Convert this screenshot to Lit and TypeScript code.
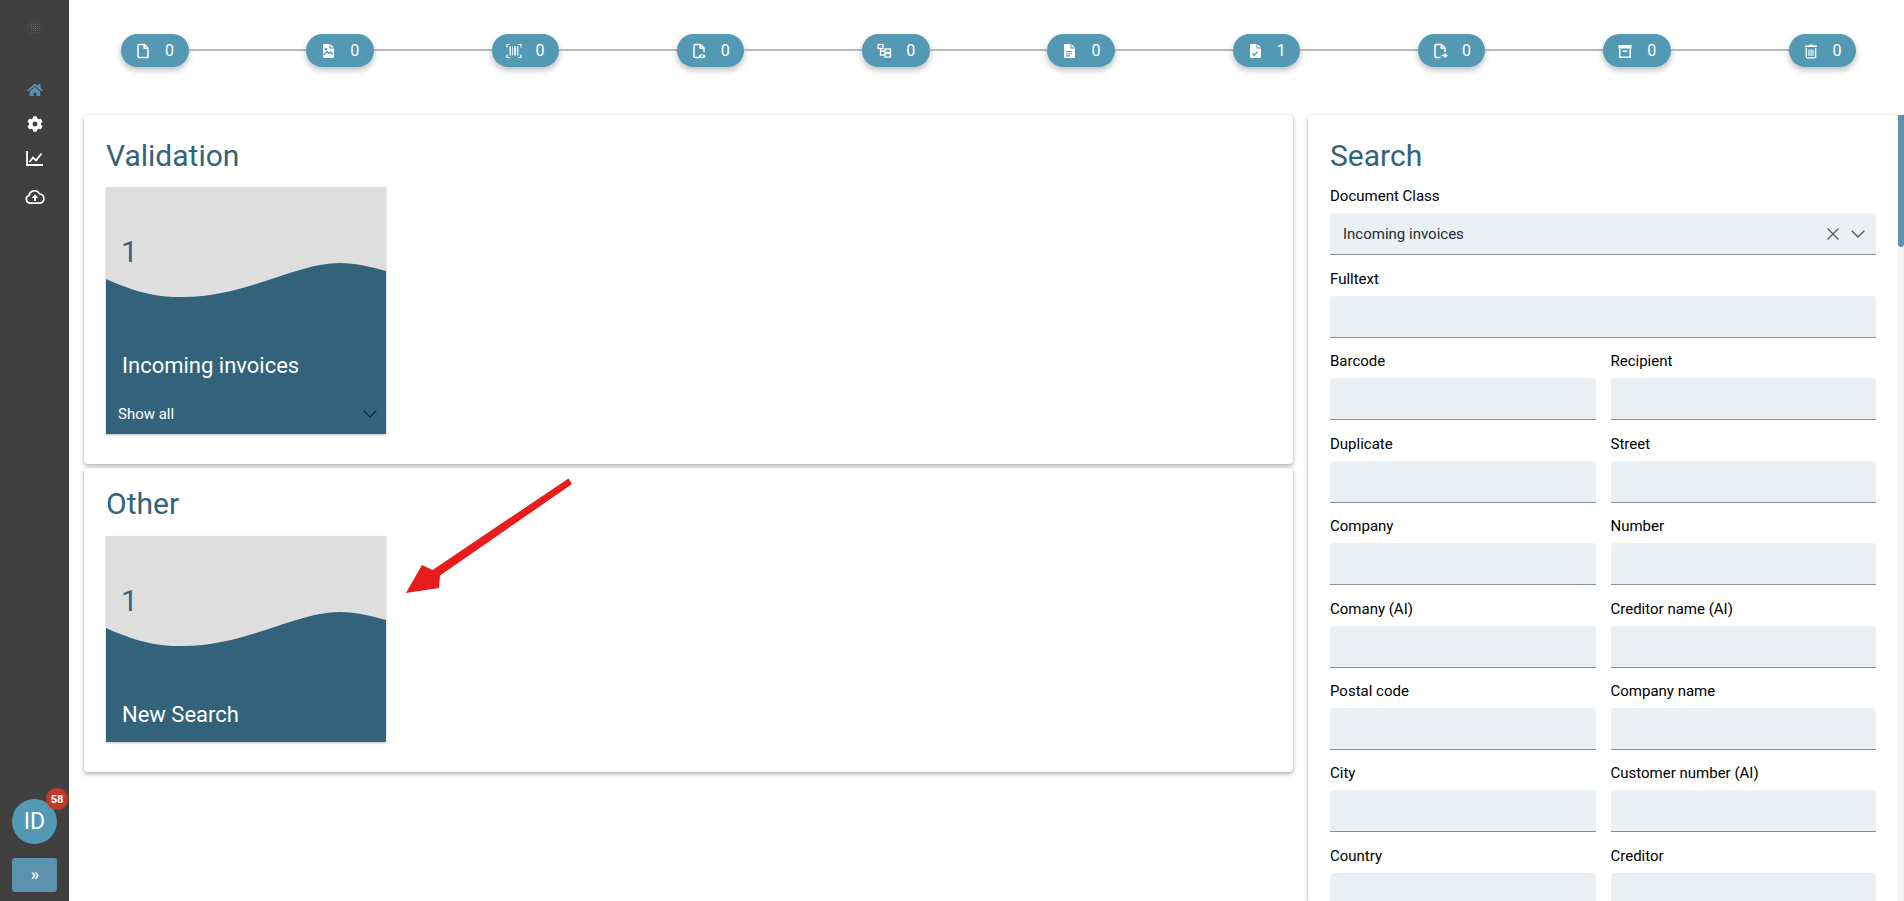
import { LitElement, html, css, svg } from "lit";
import { customElement } from "lit/decorators.js";

const FILE = "M4 1.5h5.5L13 5v9.5H4a1 1 0 0 1-1-1v-11a1 1 0 0 1 1-1z";
const FOLD = "M9.2 1.5V5.3H13";
const SOLID = "M4 1h5.500v4.500H14V14a1 1 0 0 1-1 1H4a1 1 0 0 1-1-1V2a1 1 0 0 1 1-1z M10.500 1 14 4.500h-3.500z";
const stroke = (c: unknown) => svg`<g fill="none" stroke="#fff" stroke-width="1.5" stroke-linejoin="round">${c}</g>`;
const PILL_ICONS: Record<string, unknown> = {
  file: stroke(svg`<path d=${FILE}/><path d=${FOLD}/>`),
  image: svg`<path fill="#fff" d=${SOLID}/><circle cx="6" cy="6" r="1.3" fill="#5499b3"/><path fill="none" stroke="#5499b3" stroke-width="1.4" d="M3.500 12 7 8.500l2 2 1.500-1.500 2.500 2.500"/>`,
  barcode: svg`<g fill="none" stroke="#fff" stroke-width="1.200"><path d="M1 4.500V1.500h3M12 1.500h3v3M15 11.500v3h-3M4 14.500H1v-3"/></g><path fill="#fff" opacity=".85" d="M3.500 3.500h1.500v9H3.500zM6 3.500h1v9H6zM8 3.500h2v9H8zM11 3.500h1.500v9H11z"/>`,
  fileEye: svg`${stroke(svg`<path d="M9 14.500H4a1 1 0 0 1-1-1v-11a1 1 0 0 1 1-1h5.500L13 5v4"/><path d=${FOLD}/>`)}<path fill="#fff" d="M7.500 13.200c1.800-2.600 5.700-2.600 7.500 0-1.800 2.600-5.700 2.600-7.500 0z"/><circle cx="11.200" cy="13.200" r="1.100" fill="#5499b3"/>`,
  tree: svg`<g fill="none" stroke="#fff" stroke-width="1.300"><rect x="2" y="1.500" width="5" height="4"/><path d="M4.500 5.500v6.500H8.500M4.500 8H8.500"/><rect x="9" y="6" width="5.500" height="3.400"/><rect x="9" y="10.600" width="5.500" height="3.400"/></g>`,
  fileText: svg`<path fill="#fff" d=${SOLID}/><path stroke="#5499b3" stroke-width="1.100" d="M5 8.500h6M5 10.700h6M5 12.900h4"/>`,
  fileCheck: svg`<path fill="#fff" d=${SOLID}/><path fill="none" stroke="#5499b3" stroke-width="1.400" d="m5.500 10.500 1.800 1.800 3.200-3.600"/>`,
  filePlus: svg`${stroke(svg`<path d="M8.500 14.500H4a1 1 0 0 1-1-1v-11a1 1 0 0 1 1-1h5.500L13 5v4"/><path d=${FOLD}/>`)}<path fill="none" stroke="#fff" stroke-width="1.500" d="M9.500 12.500h5M12.500 10.500l2.200 2-2.200 2"/>`,
  archive: svg`<path fill="#fff" d="M1.500 2h13v3.500h-13z"/><path fill="none" stroke="#fff" stroke-width="1.500" d="M2.800 5.500v8.700h10.400V5.500"/><path stroke="#fff" stroke-width="1.400" d="M5.500 8.200h5"/>`,
  trash: svg`<path fill="#fff" d="M2 2.500h4l.6-1h2.800l.6 1h4v1.600H2z"/><path fill="none" stroke="#fff" stroke-width="1.300" d="M3.300 4.800v9a1 1 0 0 0 1 1h7.400a1 1 0 0 0 1-1v-9"/><path stroke="#fff" stroke-width="1.100" d="M6 6.500v6.500M8 6.500v6.500M10 6.500v6.500"/>`,
};
const PILLS: [string, number][] = [["file",0],["image",0],["barcode",0],["fileEye",0],["tree",0],["fileText",0],["fileCheck",1],["filePlus",0],["archive",0],["trash",0]];
const ROWS = [["Barcode","Recipient"],["Duplicate","Street"],["Company","Number"],["Comany (AI)","Creditor name (AI)"],["Postal code","Company name"],["City","Customer number (AI)"],["Country","Creditor"]];
const dots = Array.from({ length: 64 }, (_, i) => [i % 8, Math.floor(i / 8)]);
const dotAlpha = (x: number, y: number) => Math.max(0, 0.95 - Math.hypot(x - 3.5, y - 3.5) / 4.6);

@customElement("app-root")
export class AppRoot extends LitElement {
  static styles = css`
    :host { display:block; height:901px; overflow:hidden; font-family:Roboto,"Liberation Sans",sans-serif; background:#fff; color:#000; }
    .app { display:flex; height:901px; }
    .side { width:69px; flex:none; background:#404040; display:flex; flex-direction:column; align-items:center; }
    .logo { margin-top:20px; height:16px; width:16px; display:block; }
    .nav { margin-top:37px; display:flex; flex-direction:column; align-items:center; }
    .nav div { height:34px; display:flex; align-items:center; justify-content:center; }
    .nav .cloud { margin-top:5px; }
    .nav svg { display:block; }
    .avatar { margin-top:auto; width:45px; height:45px; border-radius:50%; background:#5499b3; color:#fff; font-size:23px; font-weight:400; display:flex; align-items:center; justify-content:center; position:relative; }
    .badge { position:absolute; left:34px; top:-11px; width:22px; height:22px; border-radius:50%; background:#c0392b; color:#fff; font-size:11px; font-weight:700; display:flex; align-items:center; justify-content:center; }
    .expand { margin:14px 0 9px; width:45px; height:34px; border-radius:3px; background:#5b92ad; color:#fff; font-size:17px; font-weight:700; display:flex; align-items:center; justify-content:center; padding:0 0 3px 1px; box-sizing:border-box; }
    .main { flex:1; min-width:0; display:flex; flex-direction:column; }
    .track { height:115px; flex:none; box-sizing:border-box; padding:34px 48px 0 52px; display:flex; align-items:flex-start; }
    .pill { width:67.5px; height:33px; flex:none; border-radius:17px; background:#5499b3; color:#fff; box-shadow:0 3px 6px rgba(0,0,0,.28); display:flex; align-items:center; box-sizing:border-box; padding-left:14px; font-size:16px; }
    .pill svg { width:16px; height:16px; flex:none; }
    .pill span { margin-left:14px; }
    .line { flex:1; height:2px; margin-top:15px; background:#b9b9b9; }
    .content { flex:1; min-height:0; display:flex; padding-left:15px; gap:15px; }
    .left { width:1209px; flex:none; display:flex; flex-direction:column; }
    .card { background:#fff; border-radius:4px; box-shadow:0 2px 4px rgba(0,0,0,.3),0 0 3px rgba(0,0,0,.08); box-sizing:border-box; padding:23px 22px 30px; }
    .card + .card { margin-top:4px; padding-top:18px; }
    h2 { margin:0 0 13px; font-size:30px; line-height:36px; font-weight:400; color:#32637b; }
    .card + .card h2 { margin-bottom:14px; }
    .tile { width:280px; height:247px; position:relative; background:#dedede; color:#fff; box-shadow:0 1px 2px rgba(0,0,0,.25); display:flex; flex-direction:column; overflow:hidden; }
    .tile.short { height:206px; }
    .tile svg.wave { position:absolute; left:0; top:0; width:280px; height:100%; }
    .tile > div { position:relative; }
    .num { font-size:30px; font-weight:400; line-height:36px; color:#32637b; margin:47px 0 0 15px; }
    .name { font-size:22px; line-height:30px; margin:81px 0 0 16px; }
    .more { display:flex; justify-content:space-between; align-items:center; font-size:15px; margin:23px 9px 0 12px; height:20px; }
    .right { flex:1; min-width:0; display:flex; align-self:stretch; }
    .panel { flex:1; min-width:0; padding:23px 22px 0; border-radius:4px 0 0 0; box-shadow:0 2px 4px rgba(0,0,0,.3),0 0 3px rgba(0,0,0,.08); }
    .panel h2 { margin-bottom:12px; }
    .rail { width:6px; flex:none; background:#f3f3f3; }
    .thumb { height:132px; background:#5e92ab; border-radius:0 0 3px 3px; }
    .grid { display:grid; grid-template-columns:1fr 1fr; column-gap:15px; }
    .field { margin-bottom:13.4px; }
    .field label { display:block; font-size:15px; line-height:20px; height:20px; margin-bottom:7px; }
    .lead { margin-bottom:14px; }
    .input { height:42px; box-sizing:border-box; background:#ebf0f4; border-bottom:1px solid #8a8d92; border-radius:4px 4px 0 0; display:flex; align-items:center; padding:0 11px 0 13px; font-size:15px; color:#1c2b36; }
    .input span { flex:1; }
    .input svg { display:block; }
    .x { margin-right:11px; }
    .arrow { position:absolute; left:0; top:0; pointer-events:none; }
  `;

  render() {
    return html`<div class="app">
      <aside class="side">
        <svg class="logo" viewBox="0 0 16 16">${dots.map(([x, y]) => svg`<rect x=${x * 2} y=${y * 2} width="1" height="1" fill="#4a90bd" opacity=${dotAlpha(x, y)}/>`)}</svg>
        <nav class="nav">
          <div><svg width="16" height="14" viewBox="0 0 576 512"><path fill="#5b8fb0" d="M280.37 148.26L96 300.11V464a16 16 0 0 0 16 16l112.06-.29a16 16 0 0 0 15.92-16V368a16 16 0 0 1 16-16h64a16 16 0 0 1 16 16v95.64a16 16 0 0 0 16 16.05L464 480a16 16 0 0 0 16-16V300L295.67 148.26a12.19 12.19 0 0 0-15.3 0zM571.6 251.47L488 182.56V44.05a12 12 0 0 0-12-12h-56a12 12 0 0 0-12 12v72.61L318.47 43a48 48 0 0 0-61 0L4.34 251.47a12 12 0 0 0-1.6 16.9l25.5 31A12 12 0 0 0 45.15 301l235.22-193.74a12.19 12.19 0 0 1 15.3 0L530.9 301a12 12 0 0 0 16.9-1.6l25.5-31a12 12 0 0 0-1.7-16.93z"/></svg></div>
          <div><svg width="16" height="16" viewBox="0 0 512 512"><path fill="#fff" d="M487.4 315.7l-42.6-24.6c4.3-23.2 4.3-47 0-70.2l42.6-24.6c4.9-2.8 7.1-8.6 5.5-14-11.1-35.6-30-67.8-54.7-94.6-3.8-4.1-10-5.1-14.8-2.3L380.8 110c-17.9-15.4-38.5-27.3-60.8-35.1V25.8c0-5.6-3.9-10.5-9.4-11.7-36.7-8.2-74.3-7.8-109.2 0-5.5 1.2-9.4 6.1-9.4 11.7V75c-22.2 7.9-42.8 19.8-60.8 35.1L88.7 85.5c-4.9-2.8-11-1.9-14.8 2.3-24.7 26.7-43.6 58.9-54.7 94.6-1.7 5.4.6 11.2 5.5 14L67.3 221c-4.3 23.2-4.3 47 0 70.2l-42.6 24.6c-4.9 2.8-7.1 8.6-5.5 14 11.1 35.6 30 67.8 54.7 94.6 3.8 4.1 10 5.1 14.8 2.3l42.6-24.6c17.9 15.4 38.5 27.3 60.8 35.1v49.2c0 5.6 3.9 10.5 9.4 11.7 36.7 8.2 74.3 7.8 109.2 0 5.5-1.2 9.4-6.1 9.4-11.7v-49.2c22.2-7.9 42.8-19.8 60.8-35.1l42.6 24.6c4.9 2.8 11 1.9 14.8-2.3 24.7-26.7 43.6-58.9 54.7-94.6 1.5-5.5-.7-11.3-5.6-14.1zM256 336c-44.1 0-80-35.9-80-80s35.9-80 80-80 80 35.9 80 80-35.9 80-80 80z"/></svg></div>
          <div><svg width="17" height="15" viewBox="0 0 17 15"><path fill="none" stroke="#fff" stroke-width="1.800" d="M1 0v14H17"/><path fill="none" stroke="#fff" stroke-width="1.800" d="M3.500 11 7 6.500l3 3 5.500-7"/></svg></div>
          <div class="cloud"><svg width="20" height="14" viewBox="0 0 20 14"><path fill="none" stroke="#fff" stroke-width="1.700" d="M5 13.100a3.900 3.900 0 0 1-1-7.600A5.600 5.600 0 0 1 14.600 4a4.600 4.600 0 0 1 .5 9.100z"/><path fill="#fff" d="M10 4.200 13.300 8h-2.300v3H9V8H6.700z"/></svg></div>
        </nav>
        <div class="avatar">ID<div class="badge">58</div></div>
        <div class="expand">»</div>
      </aside>
      <main class="main">
        <div class="track">
          ${PILLS.map(([icon, n], i) => html`${i ? html`<div class="line"></div>` : ""}<div class="pill"><svg viewBox="0 0 16 16">${PILL_ICONS[icon]}</svg><span>${n}</span></div>`)}
        </div>
        <div class="content">
          <div class="left">
            <section class="card">
              <h2>Validation</h2>
              <div class="tile">
                <svg class="wave" viewBox="0 0 280 247" preserveAspectRatio="none"><path fill="#32637b" d="M0 92C40 110 60 110 77 110 140 110 190 76 234 76 250 76 265 80 280 84V247H0z"/></svg>
                <div class="num">1</div>
                <div class="name">Incoming invoices</div>
                <div class="more"><span>Show all</span><svg width="14" height="8" viewBox="0 0 14 8"><path fill="none" stroke="#1f2d3a" stroke-width="1.300" d="m.7.7 6.300 6.300L13.300.7"/></svg></div>
              </div>
            </section>
            <section class="card">
              <h2>Other</h2>
              <div class="tile short">
                <svg class="wave" viewBox="0 0 280 206" preserveAspectRatio="none"><path fill="#32637b" d="M0 92C40 110 60 110 77 110 140 110 190 76 234 76 250 76 265 80 280 84V206H0z"/></svg>
                <div class="num">1</div>
                <div class="name">New Search</div>
              </div>
            </section>
          </div>
          <div class="right">
            <section class="panel">
              <h2>Search</h2>
              <div class="field lead"><label>Document Class</label>
                <div class="input"><span>Incoming invoices</span>
                  <svg class="x" width="14" height="14" viewBox="0 0 14 14"><path fill="none" stroke="#555" stroke-width="1.300" d="m1.500 1.500 11 11M12.500 1.500l-11 11"/></svg>
                  <svg width="14" height="8" viewBox="0 0 14 8"><path fill="none" stroke="#555" stroke-width="1.300" d="m.7.7 6.300 6.300L13.300.7"/></svg>
                </div></div>
              <div class="field"><label>Fulltext</label><div class="input"></div></div>
              ${ROWS.map((r) => html`<div class="grid">${r.map((l) => html`<div class="field"><label>${l}</label><div class="input"></div></div>`)}</div>`)}
            </section>
            <div class="rail"><div class="thumb"></div></div>
          </div>
        </div>
      </main>
      <svg class="arrow" width="1904" height="901"><path fill="#e81c1c" d="M568.500 478.500 572 484 440 575.500 439 588 406 593 422 565 432.500 570z"/></svg>
    </div>`;
  }
}
